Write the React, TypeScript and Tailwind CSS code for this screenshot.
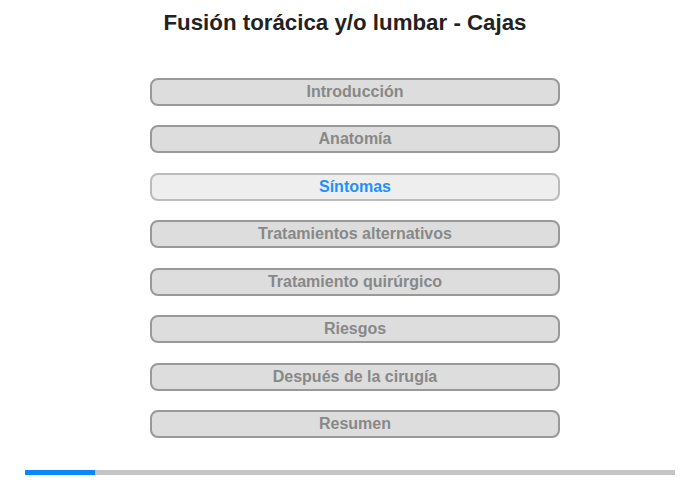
const items = [
  'Introducción',
  'Anatomía',
  'Síntomas',
  'Tratamientos alternativos',
  'Tratamiento quirúrgico',
  'Riesgos',
  'Después de la cirugía',
  'Resumen',
]

const active = 2

export default function App() {
  return (
    <div className="w-[700px] h-[480px] bg-white font-['Liberation_Sans',Arial,sans-serif] flex flex-col">
      <h1 className="pt-[9px] pr-[10px] h-[77.8px] text-center text-[22.3px] leading-[28px] font-bold text-[#222]">
        Fusión torácica y/o lumbar - Cajas
      </h1>

      <div className="w-[410px] ml-[150px] flex flex-col gap-[19.5px]">
        {items.map((label, i) =>
          i === active ? (
            <div
              key={label}
              className="h-[28px] rounded-[8px] border-2 border-[#bbb] bg-[#eee] flex items-center justify-center text-[16px] font-bold text-[#1e90ff]"
            >
              {label}
            </div>
          ) : (
            <div
              key={label}
              className="h-[28px] rounded-[8px] border-2 border-[#999] bg-[#ddd] flex items-center justify-center text-[16px] font-bold text-[#888]"
            >
              {label}
            </div>
          )
        )}
      </div>

      {/* progress bar */}
      <div className="mt-[32px] mx-[25px] h-[5px] bg-[#c4c4c4] flex">
        <div className="w-[70px] h-full bg-[#0a87ff]" />
      </div>
    </div>
  )
}
